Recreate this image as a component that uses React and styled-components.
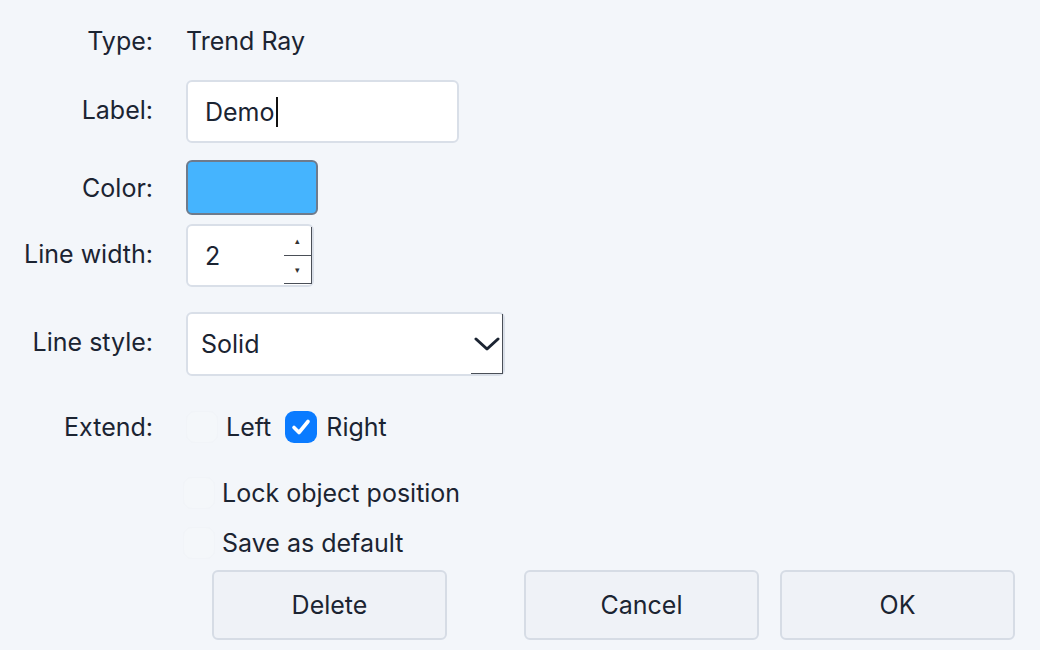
import React from 'react';
import styled, { createGlobalStyle, css } from 'styled-components';

const GlobalStyle = createGlobalStyle`
    html, body {
        margin: 0;
        padding: 0;
        background: #f3f6fa;
    }
    body {
        font-family: Inter, "Open Sans", "Liberation Sans", sans-serif;
        color: #1b2432;
    }
`;

const Dialog = styled.div`
    width: 1040px;
    height: 650px;
    box-sizing: border-box;
    padding-top: 22px;
    display: flex;
    flex-direction: column;
`;

const Row = styled.div`
    display: grid;
    grid-template-columns: 153px 1fr;
    column-gap: 33px;
    align-items: center;
    height: ${({ h }) => h}px;
    margin-top: ${({ mt }) => mt || 0}px;
`;

const Label = styled.div`
    text-align: right;
    font-size: 25px;
    white-space: nowrap;
    margin-top: ${({ lift }) => (lift ? -4 : 0)}px;
`;

const Value = styled.div`
    font-size: 25px;
`;

const fieldBox = css`
    box-sizing: border-box;
    background: #fff;
    border: 2px solid #d9dfe8;
    border-radius: 6px;
`;

const TextField = styled.div`
    ${fieldBox}
    width: 273px;
    height: 63px;
    display: flex;
    align-items: center;
    padding-left: 17px;
    font-size: 25px;
`;

const Caret = styled.span`
    display: inline-block;
    width: 2px;
    height: 30px;
    background: #111;
    margin-left: 1px;
`;

const Swatch = styled.div`
    box-sizing: border-box;
    width: 132px;
    height: 55px;
    border: 2px solid #6e7b8c;
    border-radius: 6px;
    background: ${({ color }) => color};
`;

const Spinner = styled.div`
    ${fieldBox}
    width: 128px;
    height: 63px;
    display: flex;
    align-items: center;
    padding-left: 17px;
    font-size: 25px;
`;

const SpinButtons = styled.div`
    margin-left: auto;
    align-self: stretch;
    display: flex;
    flex-direction: column;
    width: 28px;
    padding: 1px 0;
`;

const SpinButton = styled.div`
    flex: 1;
    display: flex;
    align-items: center;
    justify-content: center;
    border-right: 1.5px solid #4a4f57;
    border-bottom: 1.5px solid #4a4f57;
    font-size: 9px;
    line-height: 1;
    color: #333;
`;

const Select = styled.div`
    ${fieldBox}
    width: 319px;
    height: 64px;
    display: flex;
    align-items: center;
    padding-left: 13px;
    font-size: 25px;
`;

const SelectArrow = styled.div`
    align-self: stretch;
    width: 31px;
    margin-left: auto;
    display: flex;
    align-items: center;
    justify-content: center;
    border-right: 1.5px solid #4a4f57;
    border-bottom: 1.5px solid #4a4f57;
`;

const Checks = styled.div`
    display: flex;
    align-items: center;
    font-size: 25px;
`;

const CheckRow = styled.label`
    display: flex;
    align-items: center;
    gap: ${({ gap }) => gap}px;
    margin-right: ${({ mr }) => mr || 0}px;
    margin-left: ${({ ml }) => ml || 0}px;
`;

// unchecked boxes are almost invisible on this background
const Box = styled.span`
    box-sizing: border-box;
    width: 32px;
    height: 32px;
    border-radius: 9px;
    display: inline-flex;
    align-items: center;
    justify-content: center;
    ${({ checked }) =>
        checked
            ? css`
                  background: #0a7bff;
              `
            : css`
                  background: #f4f7fa;
                  border: 1px solid #f1f4f8;
              `}
`;

const Buttons = styled.div`
    display: flex;
    align-items: center;
    padding: 0 25px 0 212px;
    margin-top: 7px;
`;

const Button = styled.button`
    box-sizing: border-box;
    width: 235px;
    height: 70px;
    background: #eff2f7;
    border: 2px solid #d6dce5;
    border-radius: 6px;
    font: inherit;
    font-size: 25px;
    color: #1b2432;
    margin-left: ${({ ml }) => ml || 0}px;
`;

const Check = ({ checked }) => (
    <Box checked={checked}>
        {checked && (
            <svg width="22" height="22" viewBox="0 0 22 22">
                <path d="M4 11.5 L9 16.5 L18 5.5" fill="none" stroke="#fff" strokeWidth="3.6" strokeLinecap="round" strokeLinejoin="round" />
            </svg>
        )}
    </Box>
);

const App = () => (
    <>
        <GlobalStyle />
        <Dialog>
            <Row h={38}>
                <Label>Type:</Label>
                <Value>Trend Ray</Value>
            </Row>

            <Row h={63} mt={20}>
                <Label lift>Label:</Label>
                <TextField>
                    Demo
                    <Caret />
                </TextField>
            </Row>

            <Row h={55} mt={17}>
                <Label>Color:</Label>
                <Swatch color="#45b4fe" />
            </Row>

            <Row h={63} mt={9}>
                <Label lift>Line width:</Label>
                <Spinner>
                    2
                    <SpinButtons>
                        <SpinButton>▴</SpinButton>
                        <SpinButton>▾</SpinButton>
                    </SpinButtons>
                </Spinner>
            </Row>

            <Row h={64} mt={25}>
                <Label lift>Line style:</Label>
                <Select>
                    Solid
                    <SelectArrow>
                        <svg width="26" height="16" viewBox="0 0 26 16">
                            <path d="M2 3 L13 13 L24 3" fill="none" stroke="#1b2432" strokeWidth="3" strokeLinecap="round" strokeLinejoin="round" />
                        </svg>
                    </SelectArrow>
                </Select>
            </Row>

            <Row h={40} mt={31}>
                <Label>Extend:</Label>
                <Checks>
                    <CheckRow gap={8} mr={14}>
                        <Check />
                        Left
                    </CheckRow>
                    <CheckRow gap={9}>
                        <Check checked />
                        Right
                    </CheckRow>
                </Checks>
            </Row>

            <Row h={40} mt={26}>
                <span />
                <Checks>
                    <CheckRow gap={7} ml={-3}>
                        <Check />
                        Lock object position
                    </CheckRow>
                </Checks>
            </Row>

            <Row h={40} mt={10}>
                <span />
                <Checks>
                    <CheckRow gap={7} ml={-3}>
                        <Check />
                        Save as default
                    </CheckRow>
                </Checks>
            </Row>

            <Buttons>
                <Button>Delete</Button>
                <Button ml={77}>Cancel</Button>
                <Button ml={21}>OK</Button>
            </Buttons>
        </Dialog>
    </>
);

export default App;
